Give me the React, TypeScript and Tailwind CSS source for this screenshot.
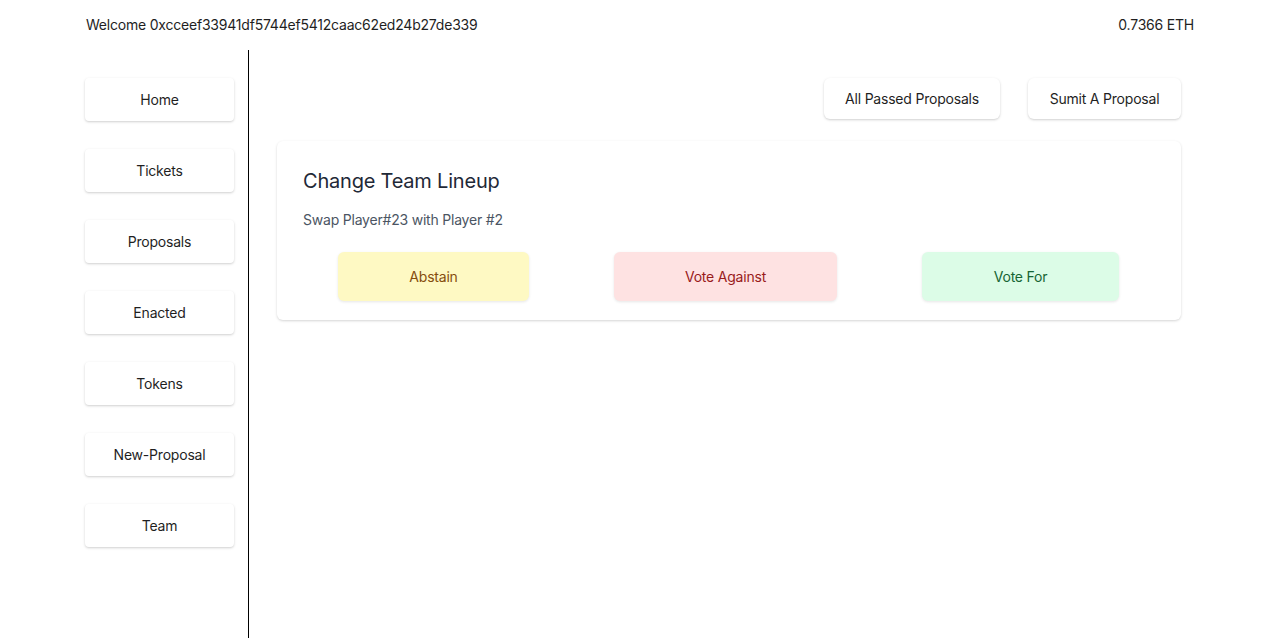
import React from "react";

const navItems = ["Home", "Tickets", "Proposals", "Enacted", "Tokens", "New-Proposal", "Team"];

export default function App() {
  return (
    <div
      className="min-h-[642px] bg-white text-[14px] tracking-[-0.015em] text-[#1f1f1f]"
      style={{ fontFamily: "Inter, 'Noto Sans', sans-serif" }}
    >
      <header className="flex justify-between pl-[86px] pr-[86px] pt-[15px] h-[50px] items-start">
        <span className="leading-[20px]">Welcome 0xcceef33941df5744ef5412caac62ed24b27de339</span>
        <span className="leading-[20px]">0.7366 ETH</span>
      </header>
      <div className="flex pl-[85px] pr-[99px]">
        <aside className="w-[164px] h-[588px] border-r border-black pr-[14px] pt-[28px] flex flex-col gap-[28px]">
          {navItems.map((n) => (
            <button
              key={n}
              className="w-[149px] h-[43px] bg-white rounded-[4px] shadow-[0_1px_3px_rgba(0,0,0,0.14),0_1px_2px_rgba(0,0,0,0.06)] flex items-center justify-center"
            >
              {n}
            </button>
          ))}
        </aside>
        <main className="flex-1 pl-[28px] pt-[28px]">
          <div className="flex justify-end gap-[28px]">
            <button className="w-[176px] h-[41px] bg-white rounded-[6px] shadow-[0_1px_3px_rgba(0,0,0,0.14),0_1px_2px_rgba(0,0,0,0.06)]">
              All Passed Proposals
            </button>
            <button className="w-[153px] h-[41px] bg-white rounded-[6px] shadow-[0_1px_3px_rgba(0,0,0,0.14),0_1px_2px_rgba(0,0,0,0.06)]">
              Sumit A Proposal
            </button>
          </div>
          <div className="mt-[22px] h-[179px] bg-white rounded-[6px] shadow-[0_1px_3px_rgba(0,0,0,0.12),0_1px_2px_rgba(0,0,0,0.05)] px-[26px] pt-[27px]">
            <h2 className="text-[20px] leading-[26px] text-[#1f2937]">Change Team Lineup</h2>
            <p className="mt-[16px] text-[14px] leading-[20px] text-[#4b5563]">Swap Player#23 with Player #2</p>
            <div className="mt-[22px] flex pl-[35px] gap-[85px]">
              <button className="w-[191px] h-[49px] rounded-[6px] bg-[#fef9c3] text-[#854d0e] shadow-[0_1px_3px_rgba(0,0,0,0.1)]">
                Abstain
              </button>
              <button className="w-[223px] h-[49px] rounded-[6px] bg-[#fee2e2] text-[#991b1b] shadow-[0_1px_3px_rgba(0,0,0,0.1)]">
                Vote Against
              </button>
              <button className="w-[197px] h-[49px] rounded-[6px] bg-[#dcfce7] text-[#166534] shadow-[0_1px_3px_rgba(0,0,0,0.1)]">
                Vote For
              </button>
            </div>
          </div>
        </main>
      </div>
    </div>
  );
}
